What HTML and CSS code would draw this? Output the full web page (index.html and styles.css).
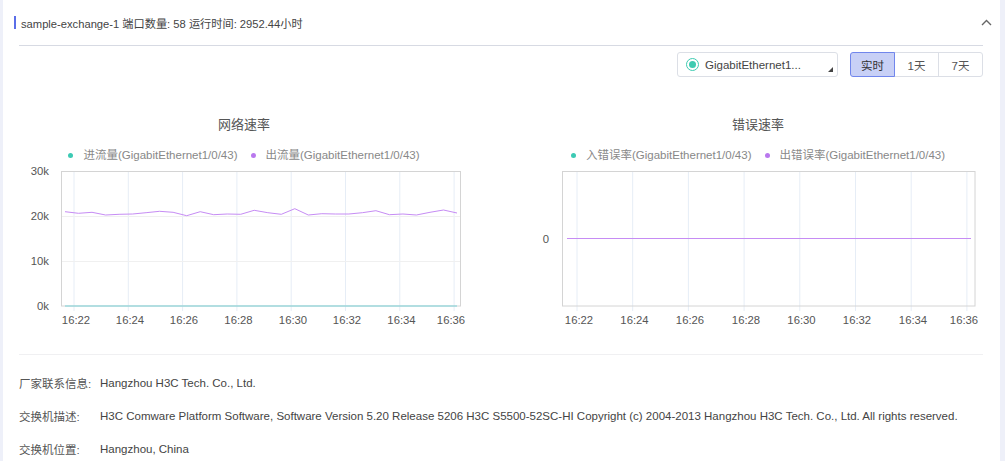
FILE: index.html
```html
<!DOCTYPE html>
<html lang="zh">
<head>
<meta charset="utf-8">
<title>sample-exchange-1</title>
<link rel="stylesheet" href="styles.css">
</head>
<body>
<div class="card">
  <div class="header">
    <span class="bar"></span>
    <span class="title">sample-exchange-1 端口数量: 58 运行时间: 2952.44小时</span>
    <span class="chev"><svg width="11" height="7" viewBox="0 0 11 7"><polyline points="1,6 5.5,1.5 10,6" fill="none" stroke="#666" stroke-width="1.4"/></svg></span>
  </div>
  <div class="toolbar">
    <div class="select">
      <span class="radio"><span class="radio-dot"></span></span>
      <span class="sel-text">GigabitEthernet1...</span>
      <span class="corner"></span>
    </div>
    <div class="btn-group">
      <span class="btn active">实时</span>
      <span class="btn">1天</span>
      <span class="btn">7天</span>
    </div>
  </div>
  <div class="charts">
    <div class="chart">
      <div class="chart-title">网络速率</div>
      <div class="legend">
        <span class="item"><span class="dot teal"></span>进流量(GigabitEthernet1/0/43)</span>
        <span class="item"><span class="dot purple"></span>出流量(GigabitEthernet1/0/43)</span>
      </div>
      <svg class="plot" width="450" height="165" viewBox="0 0 450 165">
        <g stroke="#e6edf6" stroke-width="1">
          <line x1="55" y1="6" x2="55" y2="146"/>
          <line x1="109.3" y1="6" x2="109.3" y2="146"/>
          <line x1="163.6" y1="6" x2="163.6" y2="146"/>
          <line x1="217.9" y1="6" x2="217.9" y2="146"/>
          <line x1="272.2" y1="6" x2="272.2" y2="146"/>
          <line x1="326.5" y1="6" x2="326.5" y2="146"/>
          <line x1="380.8" y1="6" x2="380.8" y2="146"/>
          <line x1="435.1" y1="6" x2="435.1" y2="146"/>
        </g>
        <g stroke="#f0f0f0" stroke-width="1">
          <line x1="42" y1="51.5" x2="442" y2="51.5"/>
          <line x1="42" y1="96.5" x2="442" y2="96.5"/>
        </g>
        <rect x="42.5" y="6.5" width="399" height="134.5" fill="none" stroke="#d4d4d4" stroke-width="1"/>
        <polyline fill="none" stroke="#c68cf4" stroke-width="1" points="46,46.7 59.5,48.3 73,47.3 86.6,50 100.1,49.3 113.6,49 127.1,47.7 140.6,46.3 154.1,47.3 167.7,50.7 181.2,46.7 194.7,49.7 208.2,49 221.7,49.3 235.2,45.3 248.8,47.7 262.3,49.3 275.8,43.7 289.3,50 302.8,48.7 316.3,49 329.9,49 343.4,47.7 356.9,45.7 370.4,49.7 383.9,49 397.4,50 411,47.3 424.5,45 438,48"/>
        <line x1="46" y1="141" x2="438" y2="141" stroke="#9fdade" stroke-width="1.5"/>
        <g class="ylab" text-anchor="end">
          <text x="30" y="10">30k</text>
          <text x="30" y="55">20k</text>
          <text x="30" y="99.5">10k</text>
          <text x="30" y="144.5">0k</text>
        </g>
        <g class="xlab" text-anchor="middle">
          <text x="57" y="159">16:22</text>
          <text x="111" y="159">16:24</text>
          <text x="165" y="159">16:26</text>
          <text x="219.5" y="159">16:28</text>
          <text x="274" y="159">16:30</text>
          <text x="328" y="159">16:32</text>
          <text x="382.5" y="159">16:34</text>
          <text x="432" y="159">16:36</text>
        </g>
      </svg>
    </div>
    <div class="chart">
      <div class="chart-title">错误速率</div>
      <div class="legend">
        <span class="item"><span class="dot teal"></span>入错误率(GigabitEthernet1/0/43)</span>
        <span class="item"><span class="dot purple"></span>出错误率(GigabitEthernet1/0/43)</span>
      </div>
      <svg class="plot" width="450" height="165" viewBox="0 0 450 165">
        <g stroke="#e6edf6" stroke-width="1">
          <line x1="44" y1="6" x2="44" y2="146"/>
          <line x1="99.7" y1="6" x2="99.7" y2="146"/>
          <line x1="155.4" y1="6" x2="155.4" y2="146"/>
          <line x1="211.1" y1="6" x2="211.1" y2="146"/>
          <line x1="266.8" y1="6" x2="266.8" y2="146"/>
          <line x1="322.5" y1="6" x2="322.5" y2="146"/>
          <line x1="378.2" y1="6" x2="378.2" y2="146"/>
          <line x1="433.9" y1="6" x2="433.9" y2="146"/>
        </g>
        <rect x="29.5" y="6.5" width="412.5" height="134.5" fill="none" stroke="#d4d4d4" stroke-width="1"/>
        <line x1="34" y1="73.5" x2="438" y2="73.5" stroke="#c68cf4" stroke-width="1.2"/>
        <g class="ylab" text-anchor="end">
          <text x="16" y="77.5">0</text>
        </g>
        <g class="xlab" text-anchor="middle">
          <text x="46" y="159">16:22</text>
          <text x="101.5" y="159">16:24</text>
          <text x="157" y="159">16:26</text>
          <text x="213" y="159">16:28</text>
          <text x="268.5" y="159">16:30</text>
          <text x="324" y="159">16:32</text>
          <text x="380" y="159">16:34</text>
          <text x="431" y="159">16:36</text>
        </g>
      </svg>
    </div>
  </div>
  <div class="info">
    <div class="row"><span class="label">厂家联系信息:</span><span class="value">Hangzhou H3C Tech. Co., Ltd.</span></div>
    <div class="row"><span class="label">交换机描述:</span><span class="value">H3C Comware Platform Software, Software Version 5.20 Release 5206 H3C S5500-52SC-HI Copyright (c) 2004-2013 Hangzhou H3C Tech. Co., Ltd. All rights reserved.</span></div>
    <div class="row"><span class="label">交换机位置:</span><span class="value">Hangzhou, China</span></div>
  </div>
</div>
</body>
</html>
```
FILE: styles.css
```css
* { box-sizing: border-box; }
html, body {
  margin: 0;
  padding: 0;
}
body {
  background: #eef0f9;
  padding: 0 5px 0 3px;
  font-family: "Liberation Sans", "Noto Sans CJK SC", sans-serif;
  font-size: 11.5px;
  color: #444;
}
.card {
  background: #fff;
  min-height: 461px;
  padding: 0 17px 0 16px;
}
.header {
  height: 46px;
  display: flex;
  align-items: center;
  border-bottom: 1px solid #d7dae3;
}
.bar {
  width: 2px;
  height: 13px;
  background: #5b6ee8;
  margin-left: -5px;
  margin-right: 5px;
}
.title {
  flex: 1;
  color: #444;
  font-size: 11.2px;
}
.chev {
  display: flex;
  margin-right: -9px;
  margin-top: -1px;
}
.toolbar {
  display: flex;
  justify-content: flex-end;
  align-items: center;
  gap: 12px;
  margin-top: 6px;
  height: 25px;
}
.select {
  width: 161px;
  height: 25px;
  border: 1px solid #dcdfe6;
  border-radius: 3px;
  display: flex;
  align-items: center;
  padding-left: 8px;
  position: relative;
}
.radio {
  width: 13px;
  height: 13px;
  border-radius: 50%;
  border: 1.5px solid #3ecbb1;
  display: flex;
  align-items: center;
  justify-content: center;
  margin-right: 6px;
}
.radio-dot {
  width: 7px;
  height: 7px;
  border-radius: 50%;
  background: #3ecbb1;
}
.sel-text {
  color: #444;
  font-size: 11.5px;
}
.corner {
  position: absolute;
  right: 4px;
  bottom: 4px;
  width: 0;
  height: 0;
  border-left: 5px solid transparent;
  border-bottom: 5px solid #444;
}
.btn-group {
  display: flex;
  height: 25px;
}
.btn {
  width: 45px;
  height: 25px;
  display: flex;
  align-items: center;
  justify-content: center;
  border: 1px solid #dcdfe6;
  margin-left: -1px;
  color: #555;
  font-size: 11.5px;
}
.btn:first-child { border-radius: 3px 0 0 3px; margin-left: 0; }
.btn:last-child { border-radius: 0 3px 3px 0; }
.btn.active {
  background: #c8d0f6;
  border-color: #7186ec;
  color: #333;
  position: relative;
}
.charts {
  display: grid;
  grid-template-columns: 450px 450px;
  justify-content: space-between;
  margin-top: 38px;
}
.chart {
  display: flex;
  flex-direction: column;
}
.chart-title {
  text-align: center;
  font-size: 13px;
  line-height: 20px;
  color: #555;
}
.legend {
  display: flex;
  justify-content: center;
  gap: 13px;
  margin-top: 12px;
  line-height: 16px;
  color: #888;
  font-size: 11.5px;
}
.item {
  display: flex;
  align-items: center;
}
.dot {
  width: 5px;
  height: 5px;
  border-radius: 50%;
  margin-right: 10px;
}
.dot.teal { background: #3ccab4; }
.dot.purple { background: #b978ee; }
.plot {
  display: block;
  margin-top: 2px;
  overflow: visible;
}
.ylab text, .xlab text {
  font-family: "Liberation Sans", sans-serif;
  font-size: 11.3px;
  fill: #555;
}
.info {
  margin-top: 24px;
  border-top: 1px solid #f0f0f2;
  padding-top: 11px;
}
.row {
  display: flex;
  height: 33px;
  align-items: center;
}
.label {
  width: 81px;
  flex-shrink: 0;
  color: #555;
}
.value {
  color: #444;
  white-space: nowrap;
}
```
